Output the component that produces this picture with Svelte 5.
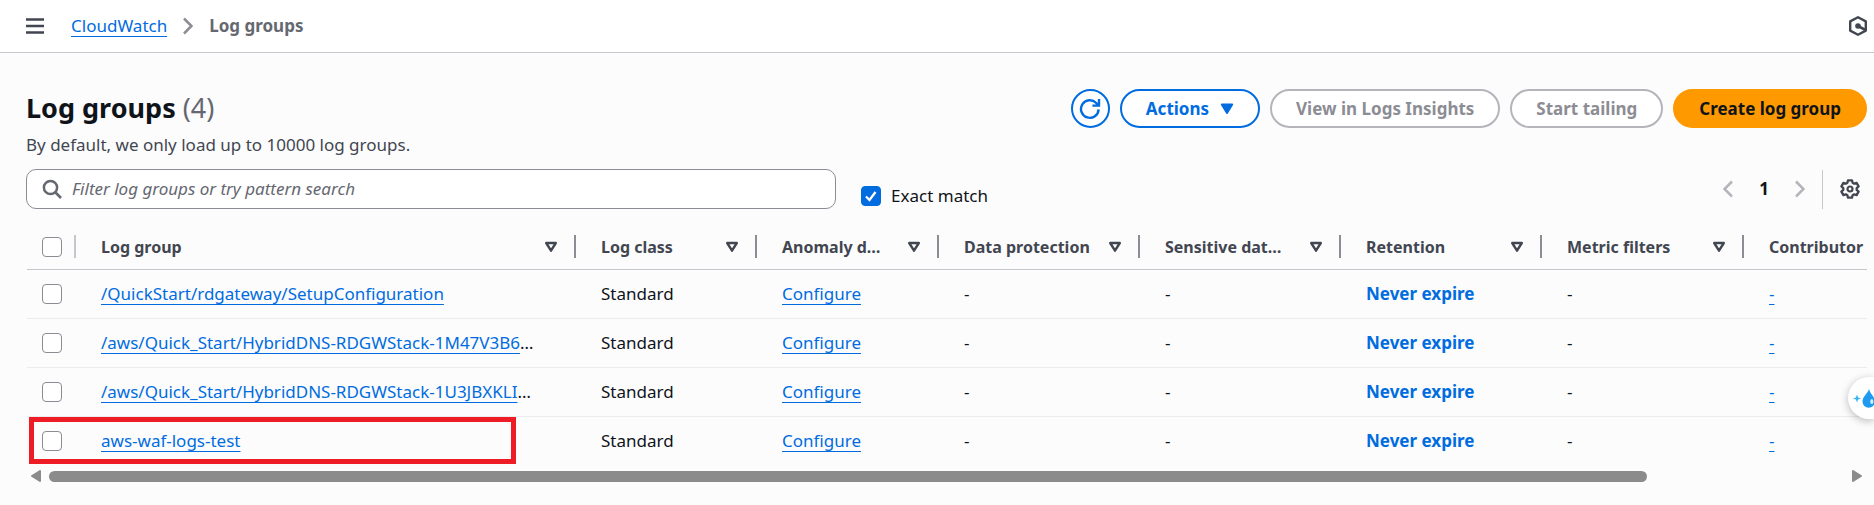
<script>
  const columns = [
    { label: 'Log group', width: 500 },
    { label: 'Log class', width: 181 },
    { label: 'Anomaly d…', width: 182 },
    { label: 'Data protection', width: 201 },
    { label: 'Sensitive dat…', width: 201 },
    { label: 'Retention', width: 201 },
    { label: 'Metric filters', width: 202 },
    { label: 'Contributor', width: 240 }
  ];
  const groups = [
    { name: '/QuickStart/rdgateway/SetupConfiguration', cut: false },
    { name: '/aws/Quick_Start/HybridDNS-RDGWStack-1M47V3B6', cut: true },
    { name: '/aws/Quick_Start/HybridDNS-RDGWStack-1U3JBXKLI', cut: true },
    { name: 'aws-waf-logs-test', cut: false, marked: true }
  ];
</script>

<header class="topbar">
  <button class="plain menu" aria-label="Open navigation">
    <svg width="18" height="16" viewBox="0 0 18 16"><path d="M0 1.5h18M0 8h18M0 14.5h18" stroke="#424650" stroke-width="2.4" /></svg>
  </button>
  <nav class="crumbs" aria-label="Breadcrumbs">
    <a href="#cloudwatch">CloudWatch</a>
    <svg width="10" height="18" viewBox="0 0 10 18"><path d="M1 1.5 8.5 9 1 16.5" fill="none" stroke="#8c8c94" stroke-width="2.5" /></svg>
    <span class="current">Log groups</span>
  </nav>
  <button class="plain" aria-label="Assistant">
    <svg width="20" height="20" viewBox="0 0 20 20"><path d="M10 1.3 17.8 5.4V14.6L10 18.7 2.2 14.6V5.4Z" fill="none" stroke="#424650" stroke-width="2.4" stroke-linejoin="round" /><circle cx="10" cy="10" r="2.8" fill="#424650" /><path d="m10 10 7.5 4" stroke="#424650" stroke-width="2.6" /></svg>
  </button>
</header>

<main>
  <section class="heading">
    <div class="titles">
      <h1>Log groups <span>(4)</span></h1>
      <p>By default, we only load up to 10000 log groups.</p>
    </div>
    <div class="actions">
      <button class="btn round" aria-label="Refresh">
        <svg width="22" height="22" viewBox="0 0 22 22"><path d="M19.6 11.4a8.8 8.8 0 1 1-2.4-6.4l2.2 2.2M20 1v6.6h-6.6" fill="none" stroke="#006ce0" stroke-width="2.4" /></svg>
      </button>
      <button class="btn">Actions
        <svg class="caret" width="14" height="12" viewBox="0 0 14 12"><path d="M1.8 1.5h10.4L7 10Z" fill="#006ce0" stroke="#006ce0" stroke-width="2" stroke-linejoin="round" /></svg>
      </button>
      <button class="btn off" disabled>View in Logs Insights</button>
      <button class="btn off" disabled>Start tailing</button>
      <button class="btn primary">Create log group</button>
    </div>
  </section>

  <section class="tools">
    <label class="search">
      <svg width="20" height="20" viewBox="0 0 20 20"><circle cx="8.5" cy="8.5" r="6.6" fill="none" stroke="#656871" stroke-width="2.5" /><path d="m13 13 6 6" stroke="#656871" stroke-width="2.7" /></svg>
      <input type="search" placeholder="Filter log groups or try pattern search" aria-label="Filter log groups" />
    </label>
    <label class="exact"><input type="checkbox" checked />Exact match</label>
    <div class="pager">
      <button class="plain" aria-label="Previous page">
        <svg width="10" height="18" viewBox="0 0 10 18"><path d="M9 1.5 1.5 9 9 16.5" fill="none" stroke="#b4b4bb" stroke-width="2.5" /></svg>
      </button>
      <b>1</b>
      <button class="plain" aria-label="Next page">
        <svg width="10" height="18" viewBox="0 0 10 18"><path d="M1 1.5 8.5 9 1 16.5" fill="none" stroke="#b4b4bb" stroke-width="2.5" /></svg>
      </button>
      <span class="rule"></span>
      <button class="plain" aria-label="Preferences">
        <svg width="20" height="20" viewBox="0 0 20 20"><path d="M8 1.3h4l.6 2.5 1.5.9 2.5-.8 2 3.4-1.9 1.8v1.8l1.9 1.8-2 3.4-2.5-.8-1.5.9-.6 2.5H8l-.6-2.5-1.5-.9-2.5.8-2-3.4 1.9-1.8V9.100L1.400 7.300l2-3.400 2.500.8 1.500-.9Z" fill="none" stroke="#424650" stroke-width="2.3" stroke-linejoin="round" /><circle cx="10" cy="10" r="2.500" fill="none" stroke="#424650" stroke-width="2.200" /></svg>
      </button>
    </div>
  </section>

  <div class="scroller">
    <table>
      <colgroup>
        <col style="width: 49px" />
        {#each columns as c}<col style="width: {c.width}px" />{/each}
      </colgroup>
      <thead>
        <tr>
          <th class="pick"><input type="checkbox" aria-label="Select all" /></th>
          {#each columns as c}
            <th scope="col">
              <div class="head">
                <span>{c.label}</span>
                <svg width="14" height="12" viewBox="0 0 14 12"><path d="M2.200 2h9.600L7 9.700Z" fill="none" stroke="#424650" stroke-width="2.400" stroke-linejoin="round" /></svg>
              </div>
            </th>
          {/each}
        </tr>
      </thead>
      <tbody>
        {#each groups as g}
          <tr>
            <td class="pick">
              <input type="checkbox" aria-label="Select {g.name}" />
              {#if g.marked}<span class="mark"></span>{/if}
            </td>
            <td><a href="#group">{g.name}</a>{g.cut ? '…' : ''}</td>
            <td>Standard</td>
            <td><a href="#configure">Configure</a></td>
            <td>-</td>
            <td>-</td>
            <td><a class="strong" href="#retention">Never expire</a></td>
            <td>-</td>
            <td><a href="#rules">-</a></td>
          </tr>
        {/each}
      </tbody>
    </table>
  </div>
  <div class="bar">
    <svg width="10" height="12" viewBox="0 0 10 12"><path d="M9 1v10L1 6Z" fill="#8b8b8b" stroke="#8b8b8b" stroke-width="2" stroke-linejoin="round" /></svg>
    <div class="track"><div class="thumb"></div></div>
    <svg width="10" height="12" viewBox="0 0 10 12"><path d="M1 1v10L9 6Z" fill="#8b8b8b" stroke="#8b8b8b" stroke-width="2" stroke-linejoin="round" /></svg>
  </div>
</main>

<button class="float" aria-label="Quick tools">
  <svg width="26" height="24" viewBox="0 0 26 24"><path d="M5 8.500 6.100 11.400 9 12.500 6.100 13.600 5 16.500 3.900 13.600 1 12.500 3.900 11.400Z" fill="#3cb4f5" /><path d="M17 3C16 7 10.500 10.500 10.500 15.500a6.200 6.200 0 0 0 12.400 0C22.900 10.500 18 8 17 3Z" fill="#1e9bf0" /><ellipse cx="19.800" cy="15.500" rx="1.600" ry="2.600" fill="#d4eeff" /></svg>
</button>

<style>
  :global(body) {
    margin: 0;
    background: #fcfcfd;
    overflow: hidden;
  }
  :global(#app) {
    font: 17px/24px "Noto Sans", "Open Sans", sans-serif;
    color: #0f141a;
  }
  svg {
    display: block;
    flex: none;
  }
  button,
  input {
    font: inherit;
  }
  .plain {
    border: 0;
    padding: 0;
    background: none;
  }
  a {
    color: #006ce0;
    text-decoration: underline 1px;
    text-underline-offset: 4px;
    text-decoration-skip-ink: none;
  }
  .strong {
    font-weight: 700;
    text-decoration: none;
  }
  .topbar {
    display: flex;
    align-items: center;
    height: 52px;
    padding: 0 6px 0 26px;
    background: #fff;
    border-bottom: 1px solid #c6c6cd;
  }
  .crumbs {
    display: flex;
    align-items: center;
    gap: 16px;
    flex: 1;
    margin-left: 27px;
  }
  .current {
    font-weight: 700;
    color: #656871;
  }
  main {
    padding: 36px 7px 0 26px;
  }
  .heading {
    display: flex;
    justify-content: space-between;
    align-items: flex-start;
  }
  h1 {
    margin: 0;
    font-size: 27px;
    line-height: 38px;
  }
  h1 span {
    font-weight: 400;
    color: #656871;
  }
  p {
    margin: 6px 0 0;
    color: #424650;
  }
  .actions {
    display: flex;
    gap: 10px;
  }
  .btn {
    display: flex;
    align-items: center;
    justify-content: center;
    gap: 11px;
    height: 39px;
    padding: 0 24px;
    border: 2px solid #006ce0;
    border-radius: 20px;
    background: #fff;
    color: #006ce0;
    font-weight: 700;
    white-space: nowrap;
  }
  .round {
    width: 39px;
    padding: 0;
  }
  .off {
    border-color: #b4b4bb;
    color: #8c8c94;
  }
  .primary {
    background: #ff9900;
    border-color: #ff9900;
    color: #0f141a;
  }
  .tools {
    display: flex;
    align-items: center;
    margin-top: 12px;
  }
  .search {
    display: flex;
    align-items: center;
    gap: 10px;
    box-sizing: border-box;
    width: 44%;
    height: 40px;
    padding: 0 15px;
    border: 1px solid #8c8c94;
    border-radius: 10px;
    background: #fff;
  }
  .search input {
    flex: 1;
    min-width: 0;
    padding: 0;
    border: 0;
    outline: 0;
    background: none;
  }
  .search input::placeholder {
    color: #656871;
    font-style: italic;
    opacity: 1;
  }
  input[type='checkbox'] {
    appearance: none;
    box-sizing: border-box;
    display: block;
    flex: none;
    width: 20px;
    height: 20px;
    margin: 0;
    border: 1px solid #8c8c94;
    border-radius: 4px;
    background: #fff;
  }
  input[type='checkbox']:checked {
    border-color: #006ce0;
    background: #006ce0 url("data:image/svg+xml,%3Csvg xmlns='http://www.w3.org/2000/svg' viewBox='0 0 18 18'%3E%3Cpath d='M4 9.500 7.500 13 13.500 5' fill='none' stroke='white' stroke-width='2.300'/%3E%3C/svg%3E");
  }
  .exact {
    display: flex;
    align-items: center;
    gap: 10px;
    margin: 14px 0 0 25px;
  }
  .pager {
    display: flex;
    align-items: center;
    gap: 26px;
    margin-left: auto;
    padding-right: 7px;
  }
  .rule {
    width: 1px;
    height: 39px;
    margin: 0 -9px;
    background: #c6c6cd;
  }
  .scroller {
    overflow: hidden;
    margin: 15px 0 0 1px;
  }
  table {
    width: 1957px;
    table-layout: fixed;
    border-collapse: separate;
    border-spacing: 0;
  }
  th,
  td {
    box-sizing: border-box;
    height: 49px;
    padding: 0 0 0 25px;
    border-bottom: 1px solid #ebebf0;
    text-align: left;
    white-space: nowrap;
  }
  th {
    height: 46px;
    border-color: #c6c6cd;
    color: #424650;
    font-size: 16px;
  }
  tbody tr:last-child td {
    border-color: transparent;
  }
  .pick {
    position: relative;
    padding-left: 15px;
  }
  th.pick {
    background: linear-gradient(#c6c6cd, #c6c6cd) right center / 2px 23px no-repeat;
  }
  .head {
    display: flex;
    align-items: center;
    justify-content: space-between;
    height: 23px;
    padding-right: 16px;
    border-right: 2px solid #8c8c94;
  }
  .mark {
    position: absolute;
    z-index: 1;
    box-sizing: border-box;
    top: 0;
    left: 2px;
    width: 487px;
    height: 47px;
    border: 5px solid #ee1c25;
  }
  .bar {
    display: flex;
    align-items: center;
    gap: 8px;
    margin-top: 4px;
    padding: 0 5px;
  }
  .track {
    flex: 1;
  }
  .thumb {
    width: 89%;
    height: 11px;
    border-radius: 6px;
    background: #8b8b8b;
  }
  .float {
    position: absolute;
    top: 377px;
    right: 0;
    width: 26px;
    height: 42px;
    padding: 0 0 0 4px;
    overflow: hidden;
    border: 0;
    border-radius: 21px 0 0 21px;
    background: #fff;
    box-shadow: 0 2px 8px #0004;
  }
</style>
